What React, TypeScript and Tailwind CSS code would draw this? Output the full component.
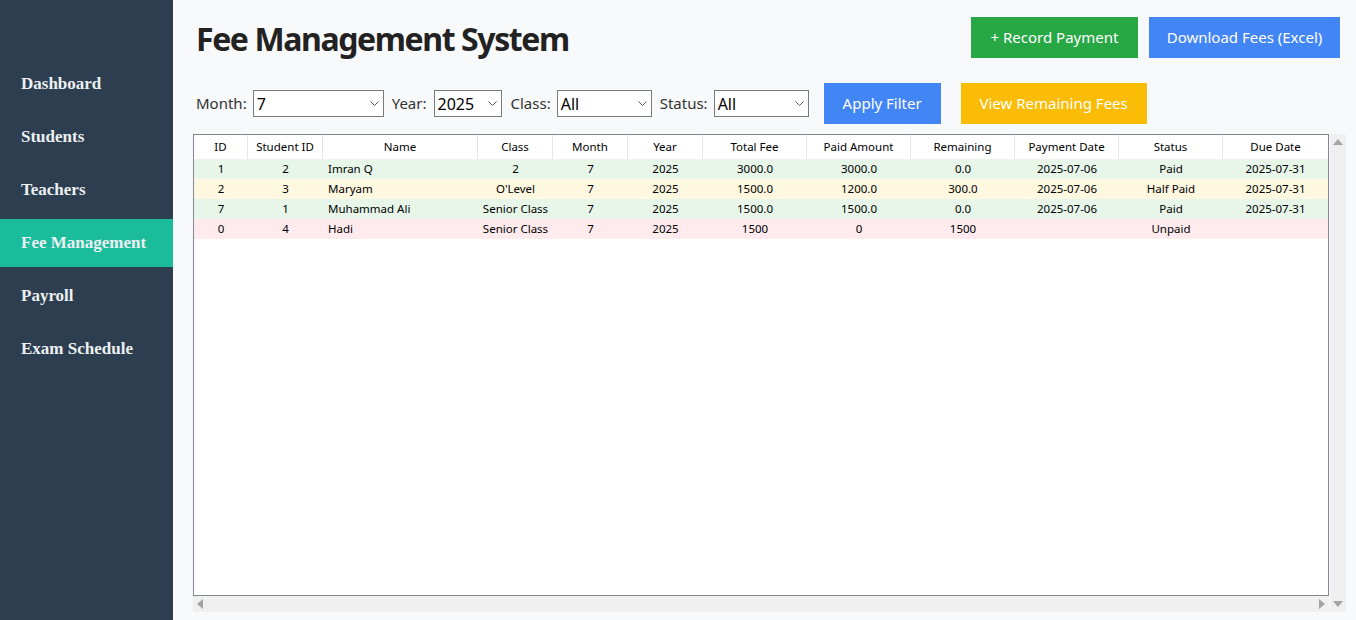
import React from 'react'

const navItems = ['Dashboard', 'Students', 'Teachers', 'Fee Management', 'Payroll', 'Exam Schedule']

const columns = [
  { key: 'id', label: 'ID', w: 'w-[54px]' },
  { key: 'sid', label: 'Student ID', w: 'w-[75px]' },
  { key: 'name', label: 'Name', w: 'w-[155px]', left: true },
  { key: 'cls', label: 'Class', w: 'w-[75px]' },
  { key: 'month', label: 'Month', w: 'w-[75px]' },
  { key: 'year', label: 'Year', w: 'w-[75px]' },
  { key: 'total', label: 'Total Fee', w: 'w-[104px]' },
  { key: 'paid', label: 'Paid Amount', w: 'w-[104px]' },
  { key: 'rem', label: 'Remaining', w: 'w-[104px]' },
  { key: 'pdate', label: 'Payment Date', w: 'w-[104px]' },
  { key: 'status', label: 'Status', w: 'w-[104px]' },
  { key: 'due', label: 'Due Date', w: 'flex-1' },
]

const rows = [
  { bg: 'bg-[#e8f5e9]', cells: ['1', '2', 'Imran Q', '2', '7', '2025', '3000.0', '3000.0', '0.0', '2025-07-06', 'Paid', '2025-07-31'] },
  { bg: 'bg-[#fff8e1]', cells: ['2', '3', 'Maryam', "O'Level", '7', '2025', '1500.0', '1200.0', '300.0', '2025-07-06', 'Half Paid', '2025-07-31'] },
  { bg: 'bg-[#e8f5e9]', cells: ['7', '1', 'Muhammad Ali', 'Senior Class', '7', '2025', '1500.0', '1500.0', '0.0', '2025-07-06', 'Paid', '2025-07-31'] },
  { bg: 'bg-[#ffebee]', cells: ['0', '4', 'Hadi', 'Senior Class', '7', '2025', '1500', '0', '1500', '', 'Unpaid', ''] },
]

function Chevron() {
  return (
    <svg width="9" height="6" viewBox="0 0 9 6" className="shrink-0">
      <path d="M0.5 0.5 L4.5 4.5 L8.5 0.5" fill="none" stroke="#555" strokeWidth="1" />
    </svg>
  )
}

function Dropdown({ value, w }: { value: string; w: string }) {
  return (
    <div className={`${w} h-[27px] flex items-center justify-between border border-[#7a7a7a] bg-white pl-[3px] pr-[4px] text-[16px] text-black`}>
      <span>{value}</span>
      <Chevron />
    </div>
  )
}

function Arrow({ dir }: { dir: 'up' | 'down' | 'left' | 'right' }) {
  const pts = {
    up: '0,6 5,0 10,6',
    down: '0,0 5,6 10,0',
    left: '6,0 0,5 6,10',
    right: '0,0 6,5 0,10',
  }[dir]
  const vert = dir === 'up' || dir === 'down'
  return (
    <svg width={vert ? 10 : 6} height={vert ? 6 : 10} viewBox={vert ? '0 0 10 6' : '0 0 6 10'}>
      <polygon points={pts} fill="#a3a3a3" />
    </svg>
  )
}

export default function App() {
  return (
    <div className="flex h-[620px] w-[1356px] overflow-hidden bg-[#f8f9fa] font-['Segoe_UI','Noto_Sans',sans-serif]">
      <aside className="w-[173px] shrink-0 bg-[#2c3e50] pt-[60px] flex flex-col gap-[5px]">
        {navItems.map((item) => (
          <div
            key={item}
            className={`h-[48px] flex items-center pl-[21px] font-['Liberation_Serif',serif] text-[17px] font-bold text-[#ecf0f1] ${
              item === 'Fee Management' ? 'bg-[#1abc9c]' : ''
            }`}
          >
            {item}
          </div>
        ))}
      </aside>

      <main className="flex-1 flex flex-col pl-[20px] pr-[10px] pt-[17px] pb-[8px]">
        <div className="flex items-center justify-between h-[41px] pr-[6px]">
          <h1 className="ml-[3px] mt-[2px] text-[32px] font-bold text-[#222] tracking-[-1.4px] leading-none">Fee Management System</h1>
          <div className="flex gap-[11px]">
            <button className="h-[41px] w-[167px] bg-[#28a745] text-white text-[15px]">+ Record Payment</button>
            <button className="h-[41px] w-[191px] bg-[#4285f4] text-white text-[15px]">Download Fees (Excel)</button>
          </div>
        </div>

        <div className="mt-[25px] flex items-center h-[41px] text-[15px] text-[#333]">
          <span className="ml-[3px] mr-[6px]">Month:</span>
          <Dropdown value="7" w="w-[131px]" />
          <span className="ml-[8px] mr-[7px]">Year:</span>
          <Dropdown value="2025" w="w-[68px]" />
          <span className="ml-[9px] mr-[6px]">Class:</span>
          <Dropdown value="All" w="w-[95px]" />
          <span className="ml-[8px] mr-[6px]">Status:</span>
          <Dropdown value="All" w="w-[95px]" />
          <button className="ml-[15px] h-[41px] w-[117px] bg-[#4285f4] text-white text-[15px]">Apply Filter</button>
          <button className="ml-[20px] h-[41px] w-[186px] bg-[#fbbc05] text-white text-[15px]">View Remaining Fees</button>
        </div>

        <div className="mt-[10px] flex-1 grid grid-cols-[1fr_17px] grid-rows-[1fr_16px]">
          <div className="border border-[#828790] bg-white overflow-hidden">
            <div className="flex h-[24px] bg-white text-[11.5px] text-black">
              {columns.map((c, i) => (
                <div
                  key={c.key}
                  className={`${c.w} flex items-center justify-center ${i < columns.length - 1 ? 'border-r border-[#e5e5e5]' : ''}`}
                >
                  {c.label}
                </div>
              ))}
            </div>
            {rows.map((r, ri) => (
              <div key={ri} className={`flex h-[20px] ${r.bg} text-[11.5px] text-black`}>
                {columns.map((c, i) => (
                  <div
                    key={c.key}
                    className={`${c.w} flex items-center ${c.left ? 'justify-start pl-[5px]' : 'justify-center'}`}
                  >
                    {r.cells[i]}
                  </div>
                ))}
              </div>
            ))}
          </div>
          <div className="row-span-2 bg-[#f0f0f0] flex flex-col items-center justify-between pt-[5px] pb-[5px] ml-[1px]">
            <Arrow dir="up" />
            <Arrow dir="down" />
          </div>
          <div className="bg-[#f0f0f0] flex items-center justify-between px-[4px]">
            <Arrow dir="left" />
            <Arrow dir="right" />
          </div>
        </div>
      </main>
    </div>
  )
}
